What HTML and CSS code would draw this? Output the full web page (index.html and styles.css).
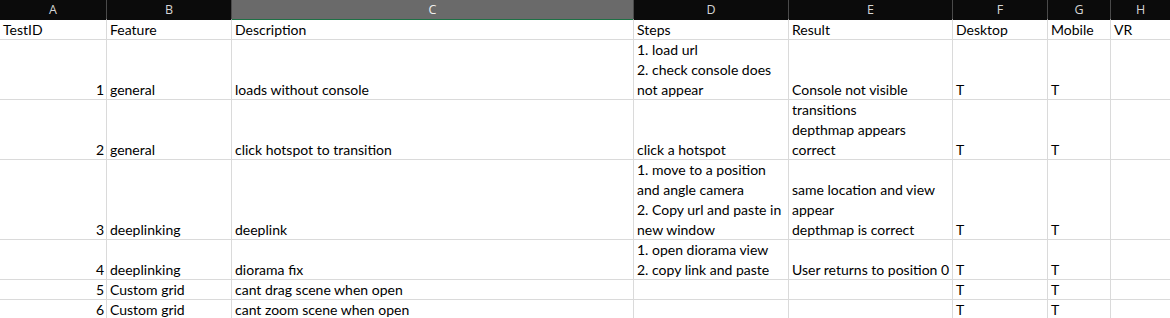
FILE: index.html
```html
<!DOCTYPE html>
<html lang="en">
<head>
    <meta charset="UTF-8" />
    <title>Test cases</title>
    <link rel="stylesheet" href="styles.css">
</head>
<body>

    <div class="sheet">
        <!-- Column letters -->
        <div class="col-heads">
            <div class="col-head">A</div>
            <div class="col-head">B</div>
            <div class="col-head selected">C</div>
            <div class="col-head">D</div>
            <div class="col-head">E</div>
            <div class="col-head">F</div>
            <div class="col-head">G</div>
            <div class="col-head">H</div>
        </div>

        <!-- Cells -->
        <div class="cells">
            <div class="cell">TestID</div>
            <div class="cell">Feature</div>
            <div class="cell">Description</div>
            <div class="cell">Steps</div>
            <div class="cell">Result</div>
            <div class="cell">Desktop</div>
            <div class="cell">Mobile</div>
            <div class="cell">VR</div>

            <div class="cell num">1</div>
            <div class="cell">general</div>
            <div class="cell">loads without console</div>
            <div class="cell">1. load url<br>2. check console does<br>not appear</div>
            <div class="cell">Console not visible</div>
            <div class="cell">T</div>
            <div class="cell">T</div>
            <div class="cell"></div>

            <div class="cell num">2</div>
            <div class="cell">general</div>
            <div class="cell">click hotspot to transition</div>
            <div class="cell">click a hotspot</div>
            <div class="cell">transitions<br>depthmap appears<br>correct</div>
            <div class="cell">T</div>
            <div class="cell">T</div>
            <div class="cell"></div>

            <div class="cell num">3</div>
            <div class="cell">deeplinking</div>
            <div class="cell">deeplink</div>
            <div class="cell">1. move to a position<br>and angle camera<br>2. Copy url and paste in<br>new window</div>
            <div class="cell">same location and view<br>appear<br>depthmap is correct</div>
            <div class="cell">T</div>
            <div class="cell">T</div>
            <div class="cell"></div>

            <div class="cell num">4</div>
            <div class="cell">deeplinking</div>
            <div class="cell">diorama fix</div>
            <div class="cell">1. open diorama view<br>2. copy link and paste</div>
            <div class="cell">User returns to position 0</div>
            <div class="cell">T</div>
            <div class="cell">T</div>
            <div class="cell"></div>

            <div class="cell num">5</div>
            <div class="cell">Custom grid</div>
            <div class="cell">cant drag scene when open</div>
            <div class="cell"></div>
            <div class="cell"></div>
            <div class="cell">T</div>
            <div class="cell">T</div>
            <div class="cell"></div>

            <div class="cell num">6</div>
            <div class="cell">Custom grid</div>
            <div class="cell">cant zoom scene when open</div>
            <div class="cell"></div>
            <div class="cell"></div>
            <div class="cell">T</div>
            <div class="cell">T</div>
            <div class="cell"></div>
        </div>
    </div>

</body>
</html>
```

FILE: styles.css
```css
/* Column widths shared by header strip and cell grid */
:root {
    --cols: 106px 124px 401px 154px 163px 94px 62px 1fr;
    --grid-line: #dadada;
    --head-bg: #0b0b0b;
}

* {
    box-sizing: border-box;
}

body {
    margin: 0;
    background: #fff;
    font-family: "Lato", sans-serif;
    overflow: hidden;
}

.sheet {
    width: 1170px;
}

/* Dark column letter strip */
.col-heads {
    display: grid;
    grid-template-columns: var(--cols);
    column-gap: 1px;
    background: #4a4a4a;
    height: 20px;
    border-bottom: 1px solid #9a9a9a;
}

.col-head {
    background: var(--head-bg);
    color: #d6d6d6;
    font-family: "Open Sans", sans-serif;
    font-size: 12.5px;
    line-height: 19px;
    text-align: center;
}

.col-head.selected {
    background: #6a6a6a;
    color: #f0f0f0;
    border-bottom: 2px solid #1e7145;
    margin-bottom: -1px;
}

/* Cell grid: the gap shows the gridlines */
.cells {
    display: grid;
    grid-template-columns: var(--cols);
    grid-template-rows: 19px 59px 59px 79px 39px 19px 19px;
    gap: 1px;
    background: var(--grid-line);
    border-bottom: 1px solid var(--grid-line);
}

.cell {
    background: #fff;
    color: #000;
    font-size: 14px;
    line-height: 20px;
    padding: 0 3px;
    display: flex;
    flex-direction: column;
    justify-content: flex-end;
    white-space: nowrap;
    overflow: visible;
}

/* Excel sits the last line a little lower than the box */
.cell::after {
    content: "";
    margin-top: -1px;
}

.cell.num {
    align-items: flex-end;
    text-align: right;
    padding-right: 2px;
}
```
